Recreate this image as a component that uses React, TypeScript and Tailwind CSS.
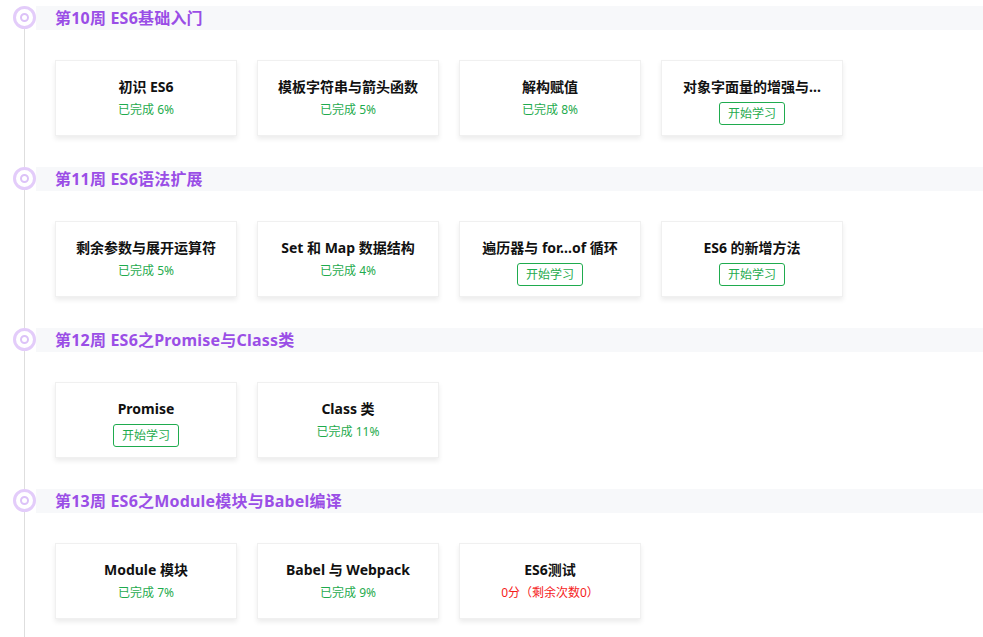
import React from "react"

type Lesson = {
    title: string
    status: "done" | "start" | "test"
    value?: string
}

type Week = {
    title: string
    lessons: Lesson[]
}

const weeks: Week[] = [
    {
        title: "第10周 ES6基础入门",
        lessons: [
            { title: "初识 ES6", status: "done", value: "6%" },
            { title: "模板字符串与箭头函数", status: "done", value: "5%" },
            { title: "解构赋值", status: "done", value: "8%" },
            { title: "对象字面量的增强与...", status: "start" },
        ],
    },
    {
        title: "第11周 ES6语法扩展",
        lessons: [
            { title: "剩余参数与展开运算符", status: "done", value: "5%" },
            { title: "Set 和 Map 数据结构", status: "done", value: "4%" },
            { title: "遍历器与 for...of 循环", status: "start" },
            { title: "ES6 的新增方法", status: "start" },
        ],
    },
    {
        title: "第12周 ES6之Promise与Class类",
        lessons: [
            { title: "Promise", status: "start" },
            { title: "Class 类", status: "done", value: "11%" },
        ],
    },
    {
        title: "第13周 ES6之Module模块与Babel编译",
        lessons: [
            { title: "Module 模块", status: "done", value: "7%" },
            { title: "Babel 与 Webpack", status: "done", value: "9%" },
            { title: "ES6测试", status: "test", value: "0分（剩余次数0）" },
        ],
    },
]

function LessonCard({ lesson }: { lesson: Lesson }) {
    return (
        <div className="w-[182px] h-[76px] bg-white border border-[#f0f0f0] shadow-[0_3px_5px_rgba(0,0,0,0.08)] flex flex-col items-center pt-[16px] px-[18px]">
            <div className="w-full text-center text-[14px] leading-[20px] font-bold text-[#111] whitespace-nowrap overflow-hidden">
                {lesson.title}
            </div>
            {lesson.status === "done" && (
                <div className="mt-[4px] text-[12px] leading-[18px] text-[#1fab4e]">已完成 {lesson.value}</div>
            )}
            {lesson.status === "test" && (
                <div className="mt-[4px] text-[12px] leading-[18px] text-[#f51b1b]">{lesson.value}</div>
            )}
            {lesson.status === "start" && (
                <button className="mt-[5px] w-[66px] h-[23px] rounded-[3px] border border-[#1fab4e] text-[12px] leading-none text-[#1fab4e] bg-white">
                    开始学习
                </button>
            )}
        </div>
    )
}

export default function App() {
    return (
        <div
            className="h-screen overflow-hidden bg-white pt-[6px]"
            style={{ fontFamily: '"Noto Sans", "Noto Sans CJK SC", sans-serif' }}
        >
            {weeks.map((week, index) => (
                <div key={`week-${index}`} className="flex">
                    {/* timeline column */}
                    <div className="w-[36px] shrink-0 pl-[13px] flex flex-col">
                        <div className="w-[23px] h-[23px] rounded-full border-[3px] border-[#e3ccfa] flex items-center justify-center">
                            <div className="w-[9px] h-[9px] rounded-full border-[2px] border-[#dcc2f8]" />
                        </div>
                        <div className="ml-[11px] w-px flex-1 bg-[#dedede]" />
                    </div>
                    <div className="flex-1 min-w-0 pb-[31px]">
                        <div className="h-[24px] bg-[#f7f8fa] pl-[19px] flex items-center text-[16px] font-bold text-[#9a4ee6] whitespace-nowrap tracking-[0.2px]">
                            {week.title}
                        </div>
                        <div className="mt-[30px] pl-[19px] flex gap-[20px]">
                            {week.lessons.map((lesson, i) => (
                                <LessonCard key={`lesson-${index}-${i}`} lesson={lesson} />
                            ))}
                        </div>
                    </div>
                </div>
            ))}
        </div>
    )
}
